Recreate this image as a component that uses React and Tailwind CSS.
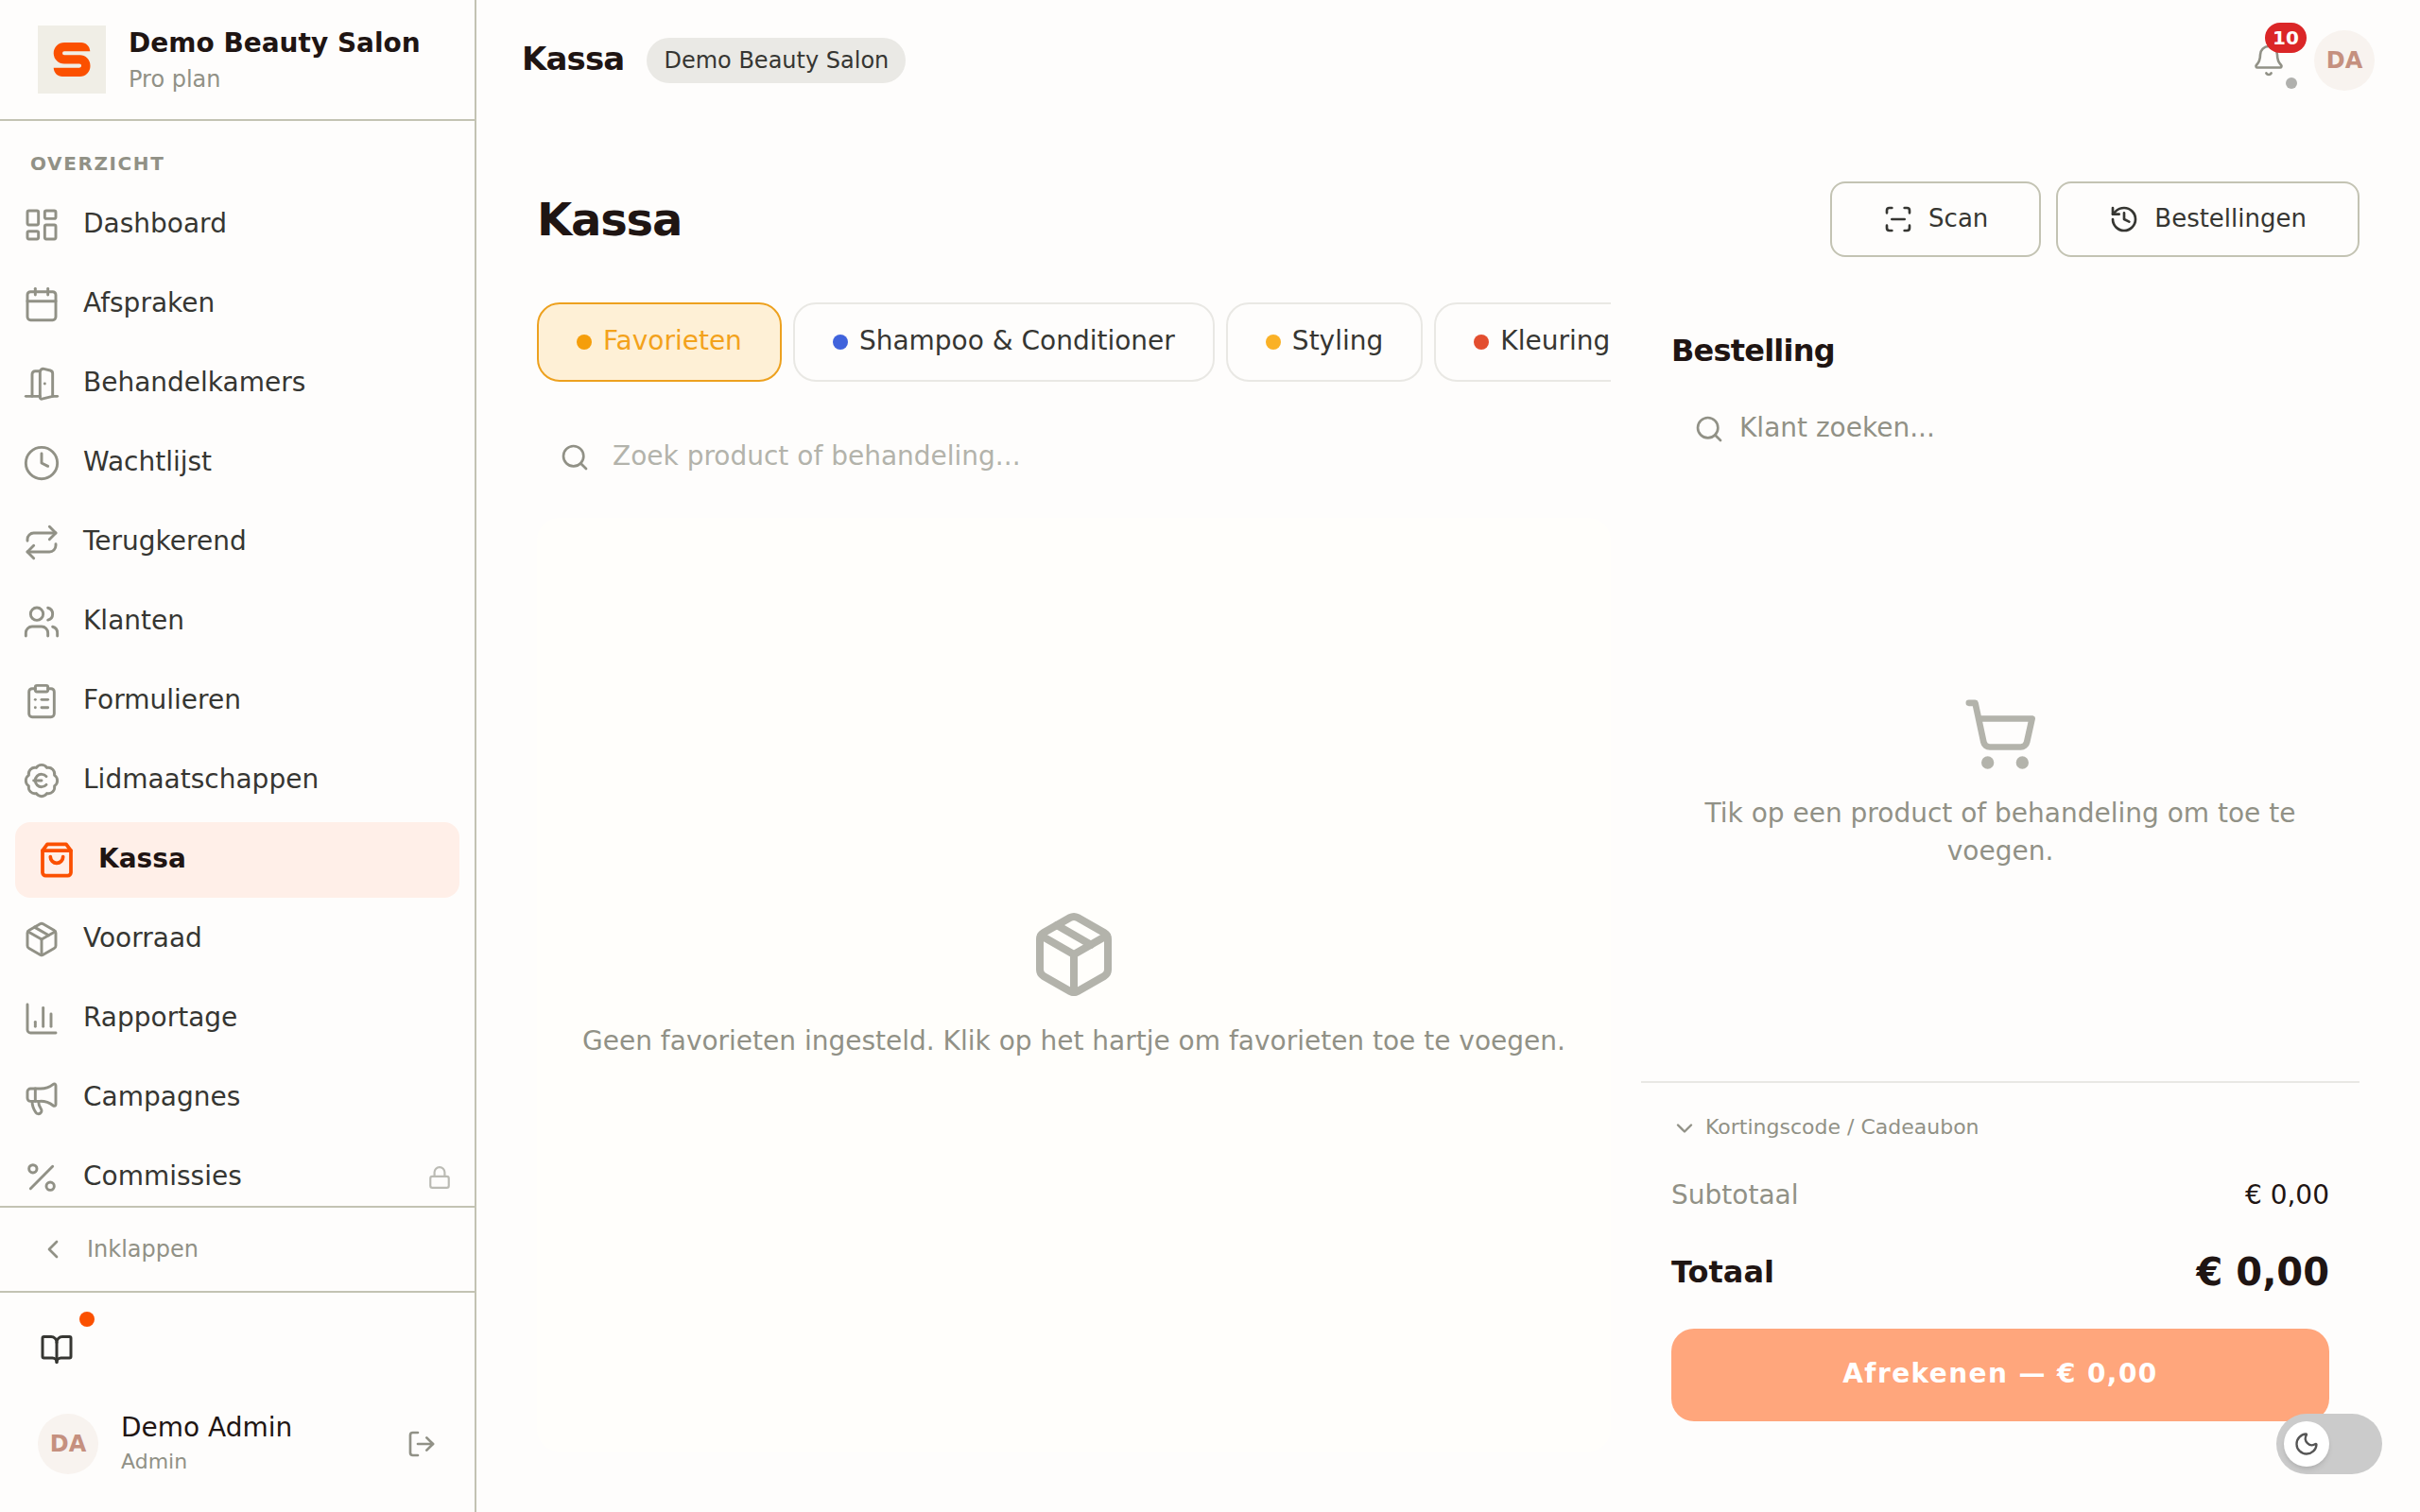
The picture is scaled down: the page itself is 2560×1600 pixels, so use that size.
import {
  LayoutDashboard, Calendar, DoorOpen, Clock, Repeat, Users, ClipboardList, BadgeEuro,
  Package, ChartColumn, Megaphone, Percent, Lock, ChevronLeft, BookOpen,
  LogOut, Bell, History, Search, ShoppingCart, ChevronDown, Moon,
} from "lucide-react";

function BagIcon({ size, strokeWidth, className }) {
  return (
    <svg width={size} height={size} viewBox="0 0 24 24" fill="none" stroke="currentColor" strokeWidth={strokeWidth} strokeLinecap="round" strokeLinejoin="round" className={className} aria-hidden="true">
      <path d="M6 2 3 6v14a2 2 0 0 0 2 2h14a2 2 0 0 0 2-2V6l-3-4Z" />
      <path d="M3 6h18" />
      <path d="M16 10a4 4 0 0 1-8 0" />
    </svg>
  );
}

function ScanIcon({ size }) {
  return (
    <svg width={size} height={size} viewBox="0 0 24 24" fill="none" stroke="currentColor" strokeWidth="2" strokeLinecap="round" strokeLinejoin="round" aria-hidden="true">
      <path d="M3 7V5a2 2 0 0 1 2-2h2" />
      <path d="M17 3h2a2 2 0 0 1 2 2v2" />
      <path d="M21 17v2a2 2 0 0 1-2 2h-2" />
      <path d="M7 21H5a2 2 0 0 1-2-2v-2" />
      <path d="M7 12h10" />
    </svg>
  );
}

const navItems = [
  { label: "Dashboard", icon: LayoutDashboard },
  { label: "Afspraken", icon: Calendar },
  { label: "Behandelkamers", icon: DoorOpen },
  { label: "Wachtlijst", icon: Clock },
  { label: "Terugkerend", icon: Repeat },
  { label: "Klanten", icon: Users },
  { label: "Formulieren", icon: ClipboardList },
  { label: "Lidmaatschappen", icon: BadgeEuro },
  { label: "Kassa", icon: BagIcon, active: true },
  { label: "Voorraad", icon: Package },
  { label: "Rapportage", icon: ChartColumn },
  { label: "Campagnes", icon: Megaphone },
  { label: "Commissies", icon: Percent, locked: true },
];

const categories = [
  { label: "Favorieten", dot: "bg-[#f59e0b]", active: true },
  { label: "Shampoo & Conditioner", dot: "bg-[#4063dc]" },
  { label: "Styling", dot: "bg-[#fab126]" },
  { label: "Kleuring", dot: "bg-[#e34e2f]" },
];

function Avatar() {
  return (
    <span className="flex size-16 shrink-0 items-center justify-center rounded-full bg-[#f8f3ef] text-2xl font-bold text-[#c5907f]">
      DA
    </span>
  );
}

function NavItem({ label, icon: Icon, active, locked }) {
  return (
    <li className={active ? "px-4" : ""}>
      <a
        href="#"
        aria-current={active ? "page" : undefined}
        className={
          active
            ? "flex h-20 items-center gap-6 rounded-2xl bg-[#ffefe8] px-6 font-bold text-[#1f1513]"
            : "flex h-20 items-center gap-6 px-6 text-[#363632]"
        }
      >
        <Icon size={40} strokeWidth={active ? 2.25 : 1.75} className={active ? "shrink-0 text-[#fb5000]" : "shrink-0 text-[#919186]"} />
        <span className="grow pb-1">{label}</span>
        {locked && <Lock size={26} className="text-[#bbbbb4]" />}
      </a>
    </li>
  );
}

function Sidebar() {
  return (
    <aside className="flex w-[504px] shrink-0 flex-col border-r-2 border-[#c3c3b3]">
      <div className="flex h-32 shrink-0 items-center gap-6 border-b-2 border-[#c3c3b3] px-10">
        <svg className="size-18 shrink-0" viewBox="0 0 72 72" role="img" aria-label="Salon logo">
          <rect width="72" height="72" fill="#f0eee6" />
          <path fill="#fb5000" d="M28 18H46C51 18 55 22 55.300 27.300H28a2 2 0 0 0 0 4H44.500a11 11.350 0 0 1 0 22.700H26C21 54 17 50 16.700 44.700H44a2.100 2.100 0 0 0 0-4.200H28a11.300 11.250 0 0 1 0-22.500Z" />
        </svg>
        <div className="flex flex-col pt-0.5">
          <span className="font-bold leading-10 text-[#1f1513]">Demo Beauty Salon</span>
          <span className="text-2xl leading-9 text-[#919186]">Pro plan</span>
        </div>
      </div>

      <nav className="min-h-0 grow basis-0 overflow-hidden" aria-label="Hoofdmenu">
        <h2 className="px-8 pt-[30px] pb-[10px] text-xl leading-[30px] font-bold tracking-[0.08em] text-[#919186]">OVERZICHT</h2>
        <ul className="flex flex-col gap-1">
          {navItems.map((item) => (
            <NavItem key={item.label} {...item} />
          ))}
        </ul>
      </nav>

      <button className="flex h-[90px] shrink-0 items-center gap-5 border-t-2 border-[#c3c3b3] px-10 text-2xl text-[#919186]">
        <ChevronLeft size={32} />
        Inklappen
      </button>

      <div className="flex shrink-0 flex-col gap-[25px] border-t-2 border-[#c3c3b3] px-5 pt-5 pb-[37px]">
        <button className="relative flex size-20 items-center justify-center text-[#363632]" aria-label="Handleiding">
          <BookOpen size={36} />
          <span className="absolute top-0 right-0 size-4 rounded-full bg-[#fb5000]" />
        </button>
        <div className="flex items-center gap-6 px-5">
          <Avatar />
          <div className="flex grow flex-col gap-0.5">
            <span className="leading-9 text-[#1f1513]">Demo Admin</span>
            <span className="text-[22px] leading-8 text-[#919186]">Admin</span>
          </div>
          <button aria-label="Uitloggen" className="text-[#919186]">
            <LogOut size={32} />
          </button>
        </div>
      </div>
    </aside>
  );
}

function TopBar() {
  return (
    <header className="flex h-32 shrink-0 items-center px-12">
      <span className="pb-1 text-[34px] font-bold tracking-tight text-[#1f1513]">Kassa</span>
      <span className="ml-6 flex h-12 items-center rounded-full bg-[#eae9e5] px-[18px] text-2xl text-[#363632]">Demo Beauty Salon</span>
      <div className="ml-auto flex items-center gap-2">
        <button className="relative flex size-20 items-center justify-center text-[#919186]" aria-label="Meldingen">
          <Bell size={36} strokeWidth={1.75} />
          <span className="absolute top-0 right-0 flex h-8 w-11 items-center justify-center rounded-full bg-[#db2627] text-xl font-bold text-white">10</span>
          <span className="absolute right-[10px] bottom-[10px] size-3 rounded-full bg-[#b0b0ad]" />
        </button>
        <Avatar />
      </div>
    </header>
  );
}

function Catalog() {
  return (
    <section className="flex min-w-0 grow flex-col">
      <div className="flex shrink-0 gap-3 overflow-hidden">
        {categories.map(({ label, dot, active }) => (
          <button
            key={label}
            className={
              active
                ? "flex h-[84px] shrink-0 items-center gap-3 rounded-3xl border-2 border-[#eda11f] bg-[#fef0d6] px-10 text-[#f3a21b]"
                : "flex h-[84px] shrink-0 items-center gap-3 rounded-3xl border-2 border-[#e9e8e4] px-10 text-[#363632]"
            }
          >
            <span className={`size-4 rounded-full ${dot}`} />
            <span className="pb-1">{label}</span>
          </button>
        ))}
      </div>
      <label className="mt-8 flex h-24 shrink-0 items-center gap-6 px-6 text-[#919186]">
        <Search size={32} className="shrink-0" />
        <input type="search" aria-label="Zoek product of behandeling" placeholder="Zoek product of behandeling..." className="grow bg-transparent pb-1 outline-none placeholder:text-[#b3b3ab]" />
      </label>
      <div className="mt-4 flex grow flex-col items-center justify-center gap-6 rounded-3xl bg-[#fffefb]">
        <Package size={96} className="text-[#b3b3ab]" />
        <p className="leading-10 text-[#919186]">Geen favorieten ingesteld. Klik op het hartje om favorieten toe te voegen.</p>
      </div>
    </section>
  );
}

function Order() {
  return (
    <section className="flex w-[760px] shrink-0 flex-col">
      <div className="flex shrink-0 flex-col gap-5 px-8 pt-8">
        <h2 className="pb-1 text-[32px] leading-[38px] font-bold tracking-tight text-[#1f1513]">Bestelling</h2>
        <label className="flex h-20 items-center gap-4 px-6 text-[#919186]">
          <Search size={32} className="shrink-0" />
          <input type="search" aria-label="Klant zoeken" placeholder="Klant zoeken..." className="grow bg-transparent pb-1 outline-none placeholder:text-[#919186]" />
        </label>
      </div>
      <div className="flex grow flex-col items-center justify-center gap-6 px-8 pt-5 text-center">
        <ShoppingCart size={80} className="text-[#b3b3ab]" />
        <p className="leading-10 text-[#919186]">Tik op een product of behandeling om toe te voegen.</p>
      </div>
      <div className="flex shrink-0 flex-col border-t-2 border-[#e9e8e4] px-8 py-8">
        <button className="flex h-8 items-center gap-2 text-[22px] text-[#919186]">
          <ChevronDown size={28} />
          <span className="pb-0.5">Kortingscode / Cadeaubon</span>
        </button>
        <dl className="flex flex-col">
          <div className="mt-[34px] flex h-10 items-center justify-between">
            <dt className="text-[#919186]">Subtotaal</dt>
            <dd className="text-[#1f1513]">€ 0,00</dd>
          </div>
          <div className="mt-[34px] flex h-14 items-center justify-between font-bold text-[#1f1513]">
            <dt className="text-[32px]">Totaal</dt>
            <dd className="text-[40px]">€ 0,00</dd>
          </div>
        </dl>
        <button className="mt-8 flex h-[98px] items-center justify-center rounded-3xl bg-[#ffa67c] pb-1 font-bold tracking-wider text-white">
          Afrekenen — € 0,00
        </button>
      </div>
    </section>
  );
}

export default function App() {
  return (
    <div className="flex h-screen overflow-hidden bg-[#fefdfc] font-['DejaVu_Sans',sans-serif] text-[28px] leading-tight">
      <Sidebar />
      <div className="flex min-w-0 grow flex-col">
        <TopBar />
        <main className="flex min-h-0 grow flex-col gap-12 p-16">
          <div className="flex shrink-0 items-center justify-between">
            <h1 className="text-5xl font-bold tracking-tight text-[#1f1513]">Kassa</h1>
            <div className="flex gap-4 text-[26px] text-[#363632]">
              <button className="flex h-20 items-center gap-4 rounded-2xl border-2 border-[#c3c3b3] px-[54px]">
                <ScanIcon size={32} />
                <span className="pb-0.5">Scan</span>
              </button>
              <button className="flex h-20 items-center gap-4 rounded-2xl border-2 border-[#c3c3b3] px-[54px]">
                <History size={32} />
                <span className="pb-0.5">Bestellingen</span>
              </button>
            </div>
          </div>
          <div className="flex min-h-0 grow gap-8">
            <Catalog />
            <Order />
          </div>
        </main>
      </div>
      <button role="switch" aria-checked="false" aria-label="Donkere modus" className="fixed right-10 bottom-10 flex h-16 w-28 items-center rounded-full bg-[#cbcbcb] p-2">
        <span className="flex size-12 items-center justify-center rounded-full bg-white text-[#555555] shadow-md">
          <Moon size={28} />
        </span>
      </button>
    </div>
  );
}
